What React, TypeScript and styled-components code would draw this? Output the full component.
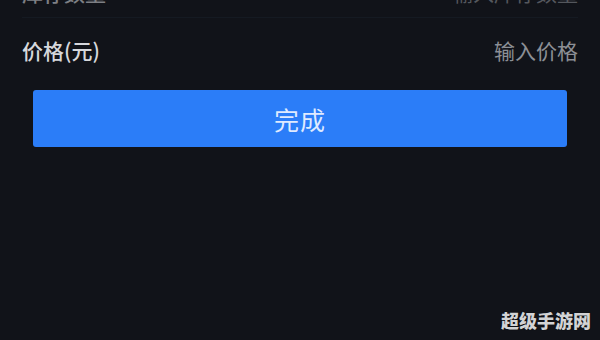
import React from 'react';
import styled, { createGlobalStyle } from 'styled-components';

const GlobalStyle = createGlobalStyle`
  html, body {
    margin: 0;
    padding: 0;
    background: #111319;
  }
  body {
    font-family: "Noto Sans CJK SC", "Noto Sans", sans-serif;
    overflow: hidden;
  }
`;

const Screen = styled.div`
  position: relative;
  width: 600px;
  height: 340px;
  overflow: hidden;
  background: #111319;
`;

const Form = styled.div`
  display: flex;
  flex-direction: column;
  padding: 0 22px;
`;

// the previous row is scrolled mostly out of view
const Row = styled.div<{ $faded?: boolean }>`
  display: flex;
  justify-content: space-between;
  box-sizing: border-box;
  height: ${p => (p.$faded ? '38px' : '64px')};
  margin-top: ${p => (p.$faded ? '-20px' : '0')};
  align-items: ${p => (p.$faded ? 'flex-start' : 'center')};
  border-bottom: ${p => (p.$faded ? '1px solid #1a202b' : 'none')};
  opacity: ${p => (p.$faded ? 0.55 : 1)};
`;

const Label = styled.span`
  font-size: 21px;
  font-weight: 500;
  line-height: 24px;
  color: #d6d8dc;
`;

const Placeholder = styled.span`
  font-size: 21px;
  line-height: 24px;
  color: #8c8f95;
`;

const DoneButton = styled.button`
  margin: 8px 11px 0;
  height: 57px;
  border: none;
  border-radius: 3px;
  background: #2b7df8;
  color: #dfeaff;
  font-family: "Noto Sans CJK SC", "Noto Sans", sans-serif;
  font-size: 25px;
  letter-spacing: 1px;
  cursor: pointer;
`;

const Watermark = styled.div`
  position: absolute;
  right: 9px;
  bottom: 9px;
  font-size: 18px;
  font-weight: 900;
  line-height: 22px;
  color: #d2d3d5;
  text-shadow: 0 0 1px #000;
`;

export default function App() {
  return (
    <>
      <GlobalStyle />
      <Screen>
        <Form>
          <Row $faded>
            <Label>库存数量</Label>
            <Placeholder>输入库存数量</Placeholder>
          </Row>
          <Row>
            <Label>价格(元)</Label>
            <Placeholder>输入价格</Placeholder>
          </Row>
          <DoneButton>完成</DoneButton>
        </Form>
        <Watermark>超级手游网</Watermark>
      </Screen>
    </>
  );
}
